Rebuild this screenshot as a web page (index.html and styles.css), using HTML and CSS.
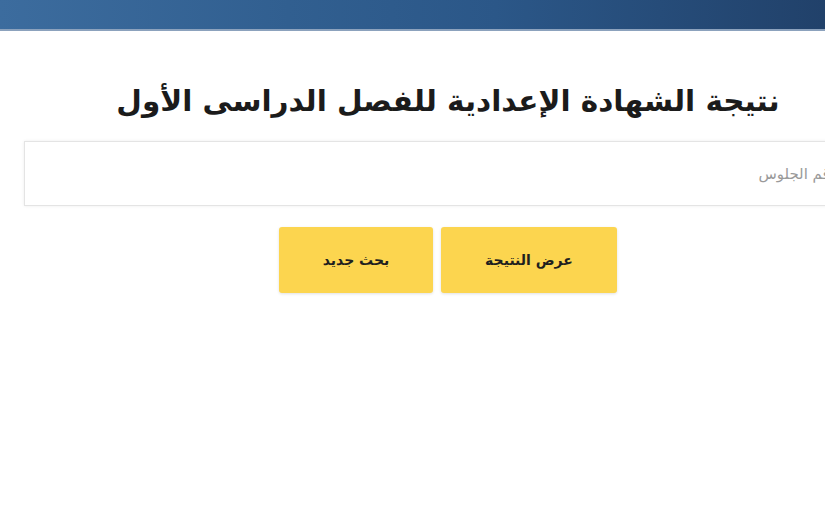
FILE: index.html
```html
<!DOCTYPE html>
<html lang="ar" dir="rtl">
<head>
<meta charset="utf-8">
<link rel="stylesheet" href="styles.css">
</head>
<body>
<header class="topbar"></header>
<main class="wrap">
  <h1 class="title">نتيجة الشهادة الإعدادية للفصل الدراسى الأول</h1>
  <div class="field">
    <input class="seat" type="text" placeholder="رقم الجلوس">
  </div>
  <div class="actions">
    <button class="btn btn-show">عرض النتيجة</button>
    <button class="btn btn-new">بحث جديد</button>
  </div>
</main>
</body>
</html>
```
FILE: styles.css
```css
html, body {
  margin: 0;
  padding: 0;
  background: #fff;
  overflow: hidden;
  width: 825px;
  height: 531px;
}
body {
  font-family: "DejaVu Sans", "Noto Sans", sans-serif;
  color: #1a1a1a;
}
.topbar {
  height: 29px;
  background: linear-gradient(90deg, #3c6c9e 0%, #315f90 35%, #2b5788 60%, #21416a 100%);
  border-bottom: 2px solid #8ca2bd;
}
.wrap {
  width: 848px;
  margin-right: -47px;
  margin-left: 24px;
  display: flex;
  flex-direction: column;
  align-items: center;
}
.title {
  margin: 50px 0 0 0;
  font-size: 29.5px;
  font-weight: bold;
  line-height: 40px;
  color: #1b1b1b;
}
.field {
  width: 100%;
  margin-top: 20px;
}
.seat {
  box-sizing: border-box;
  width: 100%;
  height: 65px;
  border: 1px solid #e4e4e4;
  box-shadow: 0 0 3px rgba(0,0,0,0.08);
  padding: 0 34px;
  font-family: inherit;
  font-size: 15px;
  direction: rtl;
  outline: none;
  background: #fff;
}
.seat::placeholder {
  color: #9a9a9a;
}
.actions {
  display: flex;
  gap: 8px;
  margin-top: 21px;
}
.btn {
  height: 66px;
  border: none;
  border-radius: 3px;
  background: #fcd54f;
  box-shadow: 0 1px 3px rgba(0,0,0,0.12);
  font-family: inherit;
  font-size: 14px;
  font-weight: bold;
  color: #1f1f1f;
}
.btn-show { width: 176px; }
.btn-new { width: 154px; }
```
